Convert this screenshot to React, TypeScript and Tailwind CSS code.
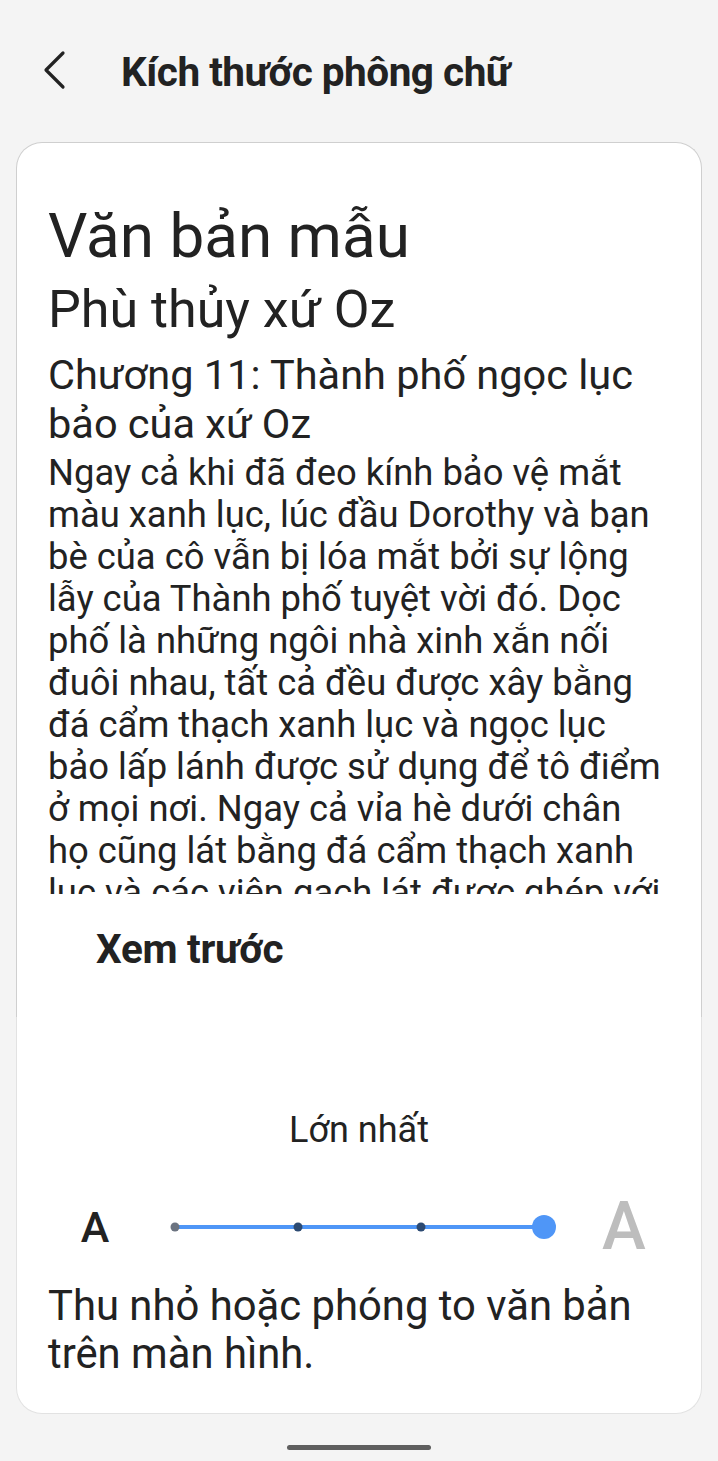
import React from 'react';

const bodyLines = [
  'Ngay cả khi đã đeo kính bảo vệ mắt',
  'màu xanh lục, lúc đầu Dorothy và bạn',
  'bè của cô vẫn bị lóa mắt bởi sự lộng',
  'lẫy của Thành phố tuyệt vời đó. Dọc',
  'phố là những ngôi nhà xinh xắn nối',
  'đuôi nhau, tất cả đều được xây bằng',
  'đá cẩm thạch xanh lục và ngọc lục',
  'bảo lấp lánh được sử dụng để tô điểm',
  'ở mọi nơi. Ngay cả vỉa hè dưới chân',
  'họ cũng lát bằng đá cẩm thạch xanh',
  'lục và các viên gạch lát được ghép với'
];

function BackIcon() {
  return (
    <svg width="24" height="40" viewBox="0 0 24 40" fill="none">
      <polyline
        points="20,3 3,20 20,37"
        stroke="#222"
        strokeWidth="3.2"
        strokeLinecap="round"
        strokeLinejoin="round"
      />
    </svg>
  );
}

function SizeSlider() {
  const stops = [0, 123, 246];
  return (
    <div className="relative h-[4px] w-[369px] bg-[#4f96f7]">
      {stops.map((left, i) => (
        <span
          key={left}
          className={`absolute top-1/2 h-[9px] w-[9px] -translate-x-1/2 -translate-y-1/2 rounded-full ${
            i === 0 ? 'bg-[#6b7380]' : 'bg-[#2c4a72]'
          }`}
          style={{ left }}
        />
      ))}
      <span className="absolute left-full top-1/2 h-[24px] w-[24px] -translate-x-1/2 -translate-y-1/2 rounded-full bg-[#4f96f7]" />
    </div>
  );
}

export default function App() {
  return (
    <div
      className="flex h-[1461px] w-[718px] flex-col bg-[#f4f4f4] text-[#222]"
      style={{ fontFamily: 'Roboto, "Noto Sans", sans-serif' }}
    >
      <header className="flex h-[142px] items-start">
        <div className="ml-[43px] mt-[50px]">
          <BackIcon />
        </div>
        <h1 className="ml-[54px] mt-[48px] text-[40.5px] font-bold leading-[48px] tracking-[-0.5px]">
          Kích thước phông chữ
        </h1>
      </header>

      <div className="mx-4 flex flex-col">
        <section className="rounded-t-[26px] border border-b-0 border-[#cfcfcf] bg-white pb-[44px] pl-[31px] pt-[57px]">
          <p className="text-[62px] leading-[72px]">Văn bản mẫu</p>
          <p className="text-[52px] leading-[76px]">Phù thủy xứ Oz</p>
          <p className="mt-[2px] text-[41.5px] leading-[49px]">
            Chương 11: Thành phố ngọc lục
            <br />
            bảo của xứ Oz
          </p>
          <div className="mt-[4px] h-[442px] overflow-hidden text-[36.4px] leading-[42px]">
            {bodyLines.map((line) => (
              <p key={line} className="whitespace-nowrap">
                {line}
              </p>
            ))}
          </div>
          <p className="ml-[48px] mt-[31px] text-[40.5px] font-bold leading-[48px] tracking-[-0.3px]">Xem trước</p>
        </section>

        <section className="flex flex-col rounded-b-[26px] border border-t-0 border-[#e2e2e2] bg-white pb-[35px] pt-[92px]">
          <p className="text-center text-[36px] leading-[42px]">Lớn nhất</p>
          <div className="mt-[46px] flex h-[60px] items-center pl-[43px]">
            <span className="w-[70px] text-center text-[43px] font-medium leading-[60px]">A</span>
            <div className="ml-[45px]">
              <SizeSlider />
            </div>
            <span className="ml-[40px] w-[80px] text-center text-[66px] font-medium leading-[60px] text-[#bdbdbd]">
              A
            </span>
          </div>
          <p className="mt-[25px] pl-[31px] text-[41.8px] leading-[48px]">
            Thu nhỏ hoặc phóng to văn bản
            <br />
            trên màn hình.
          </p>
        </section>
      </div>

      <div className="mt-[31px] flex justify-center">
        <span className="h-[5px] w-[144px] rounded-full bg-[#5f5f5f]" />
      </div>
    </div>
  );
}
